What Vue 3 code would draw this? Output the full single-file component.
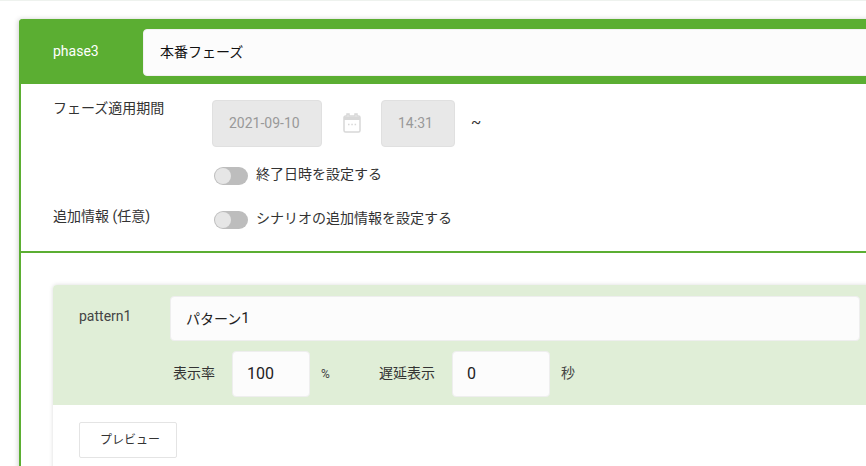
<script setup>
const toggles = { end: '終了日時を設定する', extra: 'シナリオの追加情報を設定する' }
</script>

<template>
  <div class="page">
    <section class="phase">
      <header class="phase-head">
        <span class="phase-id">phase3</span>
        <div class="field title">本番フェーズ</div>
      </header>
      <div class="settings">
        <div class="row period">
          <span class="label">フェーズ適用期間</span>
          <div class="period-body">
            <div class="dates">
              <div class="field disabled date">2021-09-10</div>
              <svg class="cal" viewBox="0 0 18 20" width="18" height="20">
                <path d="M1 4.500a1.500 1.500 0 0 1 1.500-1.500H4V1h2v2h6V1h2v2h1.500A1.500 1.500 0 0 1 17 4.500v13a1.500 1.500 0 0 1-1.500 1.500h-13A1.500 1.500 0 0 1 1 17.500Z" fill="none" stroke="#d8d8d8" stroke-width="1.500"/>
                <path d="M1 3.500h16V7H1Z" fill="#d8d8d8"/>
                <path d="M5 11.500h1.500M8.300 11.500h1.500M11.600 11.500h1.500" stroke="#d8d8d8" stroke-width="1.300"/>
              </svg>
              <div class="field disabled time">14:31</div>
              <span class="tilde">~</span>
            </div>
            <label class="switch-row first">
              <span class="switch"><span class="knob"></span></span>
              <span class="switch-text">{{ toggles.end }}</span>
            </label>
          </div>
        </div>
        <div class="row extra">
          <span class="label">追加情報 (任意)</span>
          <label class="switch-row">
            <span class="switch"><span class="knob"></span></span>
            <span class="switch-text">{{ toggles.extra }}</span>
          </label>
        </div>
      </div>
      <div class="patterns">
        <article class="pattern">
          <div class="pattern-head">
            <div class="name-row">
              <span class="pattern-id">pattern1</span>
              <div class="field name"><span class="cjk">パターン</span><span class="num">1</span></div>
            </div>
            <div class="options">
              <span class="opt-label">表示率</span>
              <div class="field rate">100</div>
              <span class="unit percent">%</span>
              <span class="opt-label delay-label">遅延表示</span>
              <div class="field delay">0</div>
              <span class="unit sec">秒</span>
            </div>
          </div>
          <div class="pattern-body">
            <button class="preview" type="button">プレビュー</button>
          </div>
        </article>
      </div>
    </section>
  </div>
</template>

<style scoped>
.page {
  width: 866px;
  height: 466px;
  overflow: hidden;
  box-sizing: border-box;
  padding: 18px 0 0 19px;
  background: #fff;
  border-top: 1px solid #eef2ee;
  font-family: Roboto, "Noto Sans CJK JP", sans-serif;
  font-size: 14px;
  color: #333;
}
.phase {
  width: 900px;
  height: 600px;
  box-sizing: border-box;
  border-left: 2px solid #5bae32;
  border-radius: 4px 0 0 0;
  box-shadow: -1px 0 5px rgba(0, 0, 0, .18);
  background: #fff;
}
.phase-head {
  display: flex;
  align-items: center;
  height: 65px;
  margin-left: -2px;
  background: #5bae32;
  border-radius: 4px 0 0 0;
}
.phase-id {
  width: 124px;
  box-sizing: border-box;
  padding-left: 34px;
  color: #fff;
  font-size: 14px;
  padding-bottom: 2px;
}
.field {
  box-sizing: border-box;
  display: flex;
  align-items: center;
  border-radius: 4px;
  background: #fcfcfc;
  color: #222;
  border: 1px solid #e8e8e8;
}
.title {
  width: 760px;
  height: 47px;
  padding: 0 0 3px 16px;
  font-size: 14px;
  color: #111;
  border-color: #f1f1f1;
  margin-top: 2px;
}
.settings {
  height: 169px;
  box-sizing: border-box;
  padding: 16px 0 0 32px;
  border-bottom: 2px solid #5bae32;
}
.row { display: flex; }
.label {
  width: 159px;
  flex: none;
  line-height: 20px;
  color: #333;
  margin-top: -2px;
}
.extra .label { margin-top: -4px; }
.dates {
  display: flex;
  align-items: center;
  height: 47px;
}
.disabled {
  background: #e8e8e8;
  border-color: #e0e0e0;
  color: #999;
  height: 47px;
  padding: 0 0 2px 16px;
}
.date { width: 110px; }
.cal { margin: 0 20px 0 21px; position: relative; top: -1px; }
.time { width: 74px; }
.tilde { margin-left: 16px; color: #333; font-size: 15px; padding-bottom: 4px; }
.switch-row {
  display: flex;
  align-items: center;
  gap: 8px;
  height: 20px;
  margin-left: 2px;
  color: #333;
}
.switch-text { padding-bottom: 6px; }
.first { margin-top: 19px; }
.extra { margin-top: 24px; }
.switch {
  position: relative;
  display: block;
  width: 34px;
  height: 18px;
  border-radius: 9px;
  background: #bdbdbd;
}
.knob {
  position: absolute;
  left: 1px;
  top: 1px;
  width: 16px;
  height: 16px;
  border-radius: 50%;
  background: #e6e6e6;
}
.patterns { padding: 32px 0 0 32px; }
.pattern {
  width: 830px;
  box-shadow: 0 0 4px rgba(0, 0, 0, .15);
  border-radius: 4px 0 0 0;
}
.pattern-head {
  height: 120px;
  box-sizing: border-box;
  padding-top: 11px;
  background: #e0eed7;
  border-radius: 4px 0 0 0;
}
.name-row { display: flex; align-items: center; }
.pattern-id {
  width: 117px;
  box-sizing: border-box;
  padding-left: 26px;
  font-size: 14px;
  color: #444;
  padding-bottom: 6px;
}
.name {
  width: 690px;
  height: 45px;
  padding: 0 0 2px 15px;
  font-size: 14px;
  border-color: #eee;
}
.num { font-size: 15px; }
.options {
  display: flex;
  align-items: center;
  margin-top: 10px;
  height: 46px;
  padding-left: 120px;
}
.opt-label { font-size: 14px; width: 59px; flex: none; color: #333; padding-bottom: 4px; }
.rate, .delay {
  height: 46px;
  padding: 0 0 2px 14px;
  font-size: 16px;
  border-color: #eee;
}
.rate { width: 78px; }
.delay { width: 98px; }
.unit { font-size: 12px; color: #444; }
.percent { margin-left: 11px; width: 58px; }
.delay-label { width: 73px; }
.sec { margin-left: 11px; font-size: 14px; padding-bottom: 4px; }
.pattern-body {
  margin-left: 2px;
  padding: 17px 0 0 24px;
  background: #fff;
  height: 80px;
  box-sizing: border-box;
}
.preview {
  display: block;
  width: 98px;
  height: 36px;
  box-sizing: border-box;
  border: 1px solid #e4e4e4;
  border-radius: 2px;
  background: #fff;
  color: #333;
  font-family: inherit;
  font-size: 12px;
  padding: 0 0 3px 4px;
}
</style>
